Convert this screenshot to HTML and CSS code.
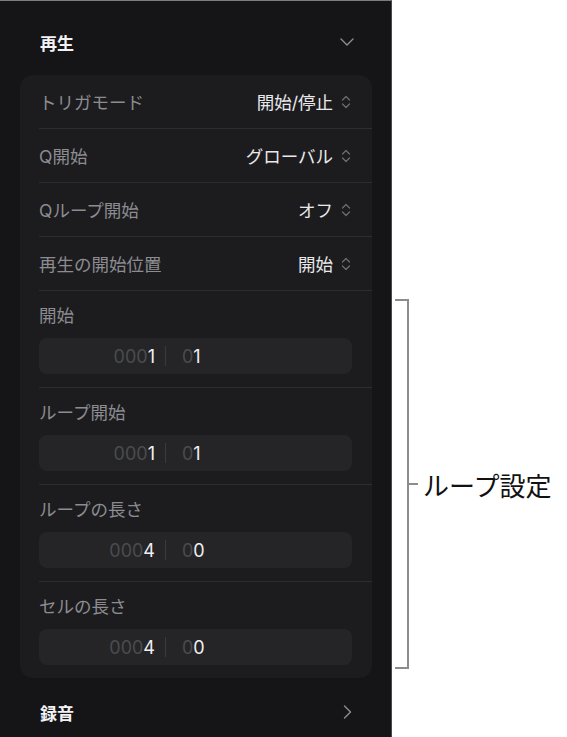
FILE: index.html
```html
<!DOCTYPE html>
<html lang="ja">
<head>
<meta charset="utf-8">
<link rel="stylesheet" href="styles.css">
</head>
<body>
<div class="page">
  <div class="panel">
    <div class="header">
      <span class="title">再生</span>
      <svg class="chev-down" width="14" height="8" viewBox="0 0 14 8"><path d="M1 1 L7 7 L13 1" fill="none" stroke="#8e8e93" stroke-width="1.4" stroke-linecap="round" stroke-linejoin="round"/></svg>
    </div>
    <div class="card">
      <div class="row">
        <span class="label">トリガモード</span>
        <span class="value">開始/停止<svg class="updown" width="10" height="14" viewBox="0 0 10 14"><path d="M1.5 5 L5 1.5 L8.5 5 M1.5 9 L5 12.5 L8.5 9" fill="none" stroke="#6e6e73" stroke-width="1.2" stroke-linecap="round" stroke-linejoin="round"/></svg></span>
      </div>
      <div class="row">
        <span class="label">Q開始</span>
        <span class="value">グローバル<svg class="updown" width="10" height="14" viewBox="0 0 10 14"><path d="M1.5 5 L5 1.5 L8.5 5 M1.5 9 L5 12.5 L8.5 9" fill="none" stroke="#6e6e73" stroke-width="1.2" stroke-linecap="round" stroke-linejoin="round"/></svg></span>
      </div>
      <div class="row">
        <span class="label">Qループ開始</span>
        <span class="value">オフ<svg class="updown" width="10" height="14" viewBox="0 0 10 14"><path d="M1.5 5 L5 1.5 L8.5 5 M1.5 9 L5 12.5 L8.5 9" fill="none" stroke="#6e6e73" stroke-width="1.2" stroke-linecap="round" stroke-linejoin="round"/></svg></span>
      </div>
      <div class="row">
        <span class="label">再生の開始位置</span>
        <span class="value">開始<svg class="updown" width="10" height="14" viewBox="0 0 10 14"><path d="M1.5 5 L5 1.5 L8.5 5 M1.5 9 L5 12.5 L8.5 9" fill="none" stroke="#6e6e73" stroke-width="1.2" stroke-linecap="round" stroke-linejoin="round"/></svg></span>
      </div>
      <div class="section">
        <div class="label">開始</div>
        <div class="field"><span class="bar"><span class="dim">000</span>1</span><span class="sep"></span><span class="beat"><span class="dim">0</span>1</span></div>
      </div>
      <div class="section">
        <div class="label">ループ開始</div>
        <div class="field"><span class="bar"><span class="dim">000</span>1</span><span class="sep"></span><span class="beat"><span class="dim">0</span>1</span></div>
      </div>
      <div class="section">
        <div class="label">ループの長さ</div>
        <div class="field"><span class="bar"><span class="dim">000</span>4</span><span class="sep"></span><span class="beat"><span class="dim">0</span>0</span></div>
      </div>
      <div class="section">
        <div class="label">セルの長さ</div>
        <div class="field"><span class="bar"><span class="dim">000</span>4</span><span class="sep"></span><span class="beat"><span class="dim">0</span>0</span></div>
      </div>
    </div>
    <div class="footer">
      <span class="title">録音</span>
      <svg class="chev-right" width="9" height="14" viewBox="0 0 9 14"><path d="M1.5 1 L7.5 7 L1.5 13" fill="none" stroke="#8e8e93" stroke-width="1.4" stroke-linecap="round" stroke-linejoin="round"/></svg>
    </div>
  </div>
  <div class="annot">
    <div class="bracket"></div>
    <div class="tick"></div>
    <div class="annot-label">ループ設定</div>
  </div>
</div>
</body>
</html>
```
FILE: styles.css
```css
* { box-sizing: border-box; }
html, body { margin: 0; padding: 0; background: #ffffff; }
body { font-family: Inter, "Noto Sans CJK JP", sans-serif; }
.page { display: flex; align-items: flex-start; height: 737px; overflow: hidden; }
.panel {
  width: 392px;
  height: 737px;
  flex-shrink: 0;
  background: #151517;
  border-top: 1px solid #7c7c7e;
  border-right: 1px solid #4a4a4c;
  display: flex;
  flex-direction: column;
  overflow: hidden;
}
.panel > * { flex-shrink: 0; }
.header {
  display: flex;
  align-items: center;
  justify-content: space-between;
  height: 36px;
  margin: 23px 0 15px;
  padding: 0 37px 0 40px;
}
.title { color: #f2f2f4; font-size: 17px; font-weight: 700; font-family: "Noto Sans CJK JP", sans-serif; }
.card {
  margin-left: 20px;
  width: 352px;
  background: #1c1c1f;
  border-radius: 13px;
}
.row {
  display: flex;
  align-items: center;
  justify-content: space-between;
  height: 54px;
  margin-left: 19px;
  padding-right: 21px;
  border-bottom: 1px solid #2d2d30;
}
.label { color: #8c8c91; font-size: 17.5px; font-family: Inter, "Noto Sans CJK JP", sans-serif; }
.value { color: #e9e9eb; font-size: 17.5px; display: flex; align-items: center; }
.updown { margin-left: 8px; }
.section {
  margin-left: 19px;
  padding: 13px 20px 13px 0;
  border-bottom: 1px solid #2d2d30;
}
.section:last-child { border-bottom: none; }
.section .label { line-height: 24px; margin-bottom: 10px; }
.field {
  height: 36px;
  border-radius: 8px;
  background: #252528;
  display: flex;
  align-items: center;
  font-size: 18px;
  color: #f0f0f2;
}
.bar { width: 116px; text-align: right; }
.dim { color: #4b4b4f; }
.sep { width: 1px; height: 20px; background: #3a3a3d; margin: 0 16px 0 10px; }
.footer {
  display: flex;
  align-items: center;
  justify-content: space-between;
  height: 68px;
  padding: 0 39px 0 40px;
}
.annot {
  display: flex;
  align-items: center;
  margin-top: 299px;
  margin-left: 3px;
  height: 370px;
}
.bracket {
  width: 14px;
  height: 100%;
  border: 2px solid #8c8c8c;
  border-left: none;
}
.tick { width: 9px; height: 2px; background: #8c8c8c; }
.annot-label {
  margin-left: 5px;
  font-family: "Noto Sans CJK JP", sans-serif;
  font-size: 26px;
  color: #111111;
}
```
